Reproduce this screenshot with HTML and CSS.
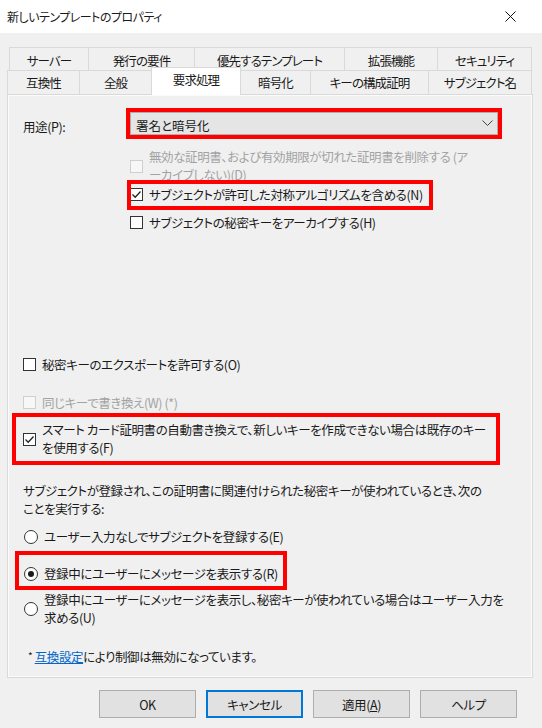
FILE: index.html
```html
<!DOCTYPE html>
<html lang="ja">
<head>
  <meta charset="UTF-8">
  <meta name="viewport" content="width=device-width, initial-scale=1.0">
  <title>新しいテンプレートのプロパティ</title>
  <link rel="stylesheet" href="styles.css">
</head>
<body>

  <div class="titlebar">
    <span class="title">新しいテンプレートのプロパティ</span>
    <svg class="close" width="11" height="11" viewBox="0 0 11 11">
      <path d="M0.5 0.5L10.5 10.5M10.5 0.5L0.5 10.5" stroke="#111" stroke-width="1" fill="none"/>
    </svg>
  </div>

  <div class="sheet">
    <div class="tabrow top">
      <div class="tab">サーバー</div>
      <div class="tab">発行の要件</div>
      <div class="tab">優先するテンプレート</div>
      <div class="tab">拡張機能</div>
      <div class="tab">セキュリティ</div>
    </div>
    <div class="tabrow bottom">
      <div class="tab">互換性</div>
      <div class="tab">全般</div>
      <div class="tab active">要求処理</div>
      <div class="tab">暗号化</div>
      <div class="tab">キーの構成証明</div>
      <div class="tab">サブジェクト名</div>
    </div>

    <div class="panel">
      <div class="field">
        <span class="label">用途(P):</span>
        <div class="combo">
          <span class="combo-text">署名と暗号化</span>
          <svg width="11" height="7" viewBox="0 0 11 7">
            <path d="M0.5 0.5L5.5 5.5L10.5 0.5" stroke="#444" stroke-width="1" fill="none"/>
          </svg>
        </div>
      </div>

      <div class="row tall indent disabled sp-13">
        <span class="box"></span>
        <span class="text">無効な証明書、および有効期限が切れた証明書を削除する (ア<br>ーカイブしない)(D)</span>
      </div>

      <div class="row indent mark mark-algo sp-2">
        <span class="box checked">
          <svg width="11" height="11" viewBox="0 0 11 11"><path d="M1.5 5.5L4.2 8.2L9.5 2.5" stroke="#222" stroke-width="1.3" fill="none"/></svg>
        </span>
        <span class="text">サブジェクトが許可した対称アルゴリズムを含める(N)</span>
      </div>

      <div class="row indent sp-11">
        <span class="box"></span>
        <span class="text">サブジェクトの秘密キーをアーカイブする(H)</span>
      </div>

      <div class="row sp-125">
        <span class="box"></span>
        <span class="text">秘密キーのエクスポートを許可する(O)</span>
      </div>

      <div class="row disabled sp-21">
        <span class="box"></span>
        <span class="text">同じキーで書き換え(W) (*)</span>
      </div>

      <div class="row tall mark mark-smartcard sp-10">
        <span class="box checked">
          <svg width="11" height="11" viewBox="0 0 11 11"><path d="M1.5 5.5L4.2 8.2L9.5 2.5" stroke="#222" stroke-width="1.3" fill="none"/></svg>
        </span>
        <span class="text">スマート カード証明書の自動書き換えで、新しいキーを作成できない場合は既存のキー<br>を使用する(F)</span>
      </div>

      <p class="para sp-25">サブジェクトが登録され、この証明書に関連付けられた秘密キーが使われているとき、次の<br>ことを実行する:</p>

      <div class="row sp-10">
        <span class="radio"></span>
        <span class="text">ユーザー入力なしでサブジェクトを登録する(E)</span>
      </div>

      <div class="row mark mark-prompt sp-20">
        <span class="radio selected"></span>
        <span class="text">登録中にユーザーにメッセージを表示する(R)</span>
      </div>

      <div class="row tall sp-9">
        <span class="radio"></span>
        <span class="text">登録中にユーザーにメッセージを表示し、秘密キーが使われている場合はユーザー入力を<br>求める(U)</span>
      </div>

      <p class="note sp-21"><span class="star">*</span> <a href="#" class="link">互換設定</a>により制御は無効になっています。</p>
    </div>

    <div class="buttons">
      <button class="btn">OK</button>
      <button class="btn default">キャンセル</button>
      <button class="btn">適用(<u>A</u>)</button>
      <button class="btn">ヘルプ</button>
    </div>
  </div>

</body>
</html>
```

FILE: styles.css
```css
body {
  margin: 0;
  width: 542px;
  height: 728px;
  overflow: hidden;
  background: #f0f0f0;
  font-family: "Noto Sans CJK JP", "Noto Sans", sans-serif;
  font-size: 12.5px;
  letter-spacing: -0.4px;
  font-feature-settings: "palt";
  color: #1a1a1a;
}

/* タイトルバー */
.titlebar {
  height: 33px;
  background: #fff;
  display: flex;
  align-items: center;
  justify-content: space-between;
  padding: 0 26px 0 7px;
}

.title {
  font-size: 12px;
  letter-spacing: -0.5px;
}

.sheet {
  padding: 14px 0 0 7px;
}

/* タブ */
.tabrow {
  display: grid;
}

.tabrow.top {
  grid-template-columns: 79px 106px 150px 93px 95px;
  height: 23px;
  margin-left: 2px;
}

.tabrow.bottom {
  grid-template-columns: 72px 72px 89px 70px 118px 104px;
  height: 24px;
}

.tab {
  display: flex;
  align-items: center;
  justify-content: center;
  border-top: 1px solid #d9d9d9;
  border-left: 1px solid #d9d9d9;
  white-space: nowrap;
  letter-spacing: -0.9px;
}

.tab:last-child {
  border-right: 1px solid #d9d9d9;
}

.tabrow.top .tab {
  padding-top: 2px;
}

.tab.active {
  position: relative;
  z-index: 1;
  background: #fff;
  margin-top: -3px;
  margin-bottom: -1px;
  border-right: 1px solid #d9d9d9;
  margin-right: -1px;
  padding-bottom: 4px;
}

/* パネル */
.panel {
  width: 526px;
  height: 584px;
  box-sizing: border-box;
  border: 1px solid #d9d9d9;
  box-shadow: inset 0 0 0 1px #fbfbfb;
  padding: 0 15px;
}

.field {
  display: flex;
  align-items: flex-start;
  margin-top: 17px;
}

.label {
  width: 107px;
  padding-top: 6px;
  line-height: 17px;
}

.combo {
  width: 368px;
  height: 23px;
  box-sizing: border-box;
  background: #e5e5e5;
  border: 1px solid #adadad;
  outline: 4px solid #f00;
  display: flex;
  align-items: center;
  justify-content: space-between;
  padding: 0 4px 0 5px;
}

.combo-text {
  padding-top: 3px;
  letter-spacing: 0;
}

.row {
  position: relative;
  display: flex;
  align-items: center;
  gap: 6px;
  line-height: 17px;
  white-space: nowrap;
}

.row.tall {
  line-height: 18px;
}

.indent {
  margin-left: 107px;
}

.box {
  flex: none;
  width: 13px;
  height: 13px;
  box-sizing: border-box;
  border: 1px solid #333;
  background: #fff;
  display: flex;
  align-items: center;
  justify-content: center;
}

.disabled {
  color: #a3a3a3;
}

.disabled .box {
  border-color: #cfcfcf;
  background: #f7f7f7;
}

.radio {
  flex: none;
  width: 14px;
  height: 14px;
  box-sizing: border-box;
  border: 1px solid #333;
  border-radius: 50%;
  background: #fff;
  display: flex;
  align-items: center;
  justify-content: center;
  margin-left: 1px;
}

.radio.selected::before {
  content: "";
  width: 6px;
  height: 6px;
  border-radius: 50%;
  background: #1a1a1a;
}

.para,
.note {
  margin-bottom: 0;
  line-height: 18px;
  white-space: nowrap;
}

.note {
  padding-left: 5px;
}

.star {
  font-size: 10px;
  position: relative;
  top: -2px;
}

.link {
  color: #0066cc;
  text-decoration: underline;
}

/* 赤枠 (注釈) */
.mark::after {
  content: "";
  position: absolute;
  border: 4px solid #f00;
  pointer-events: none;
}

.mark-algo::after {
  top: -6px;
  right: 84px;
  bottom: -7px;
  left: -3px;
}

.mark-smartcard::after {
  top: -8px;
  right: 17px;
  bottom: -8px;
  left: -11px;
}

.mark-prompt::after {
  top: -14px;
  right: 230px;
  bottom: -8px;
  left: -8px;
}

/* 行間 */
.sp-2 { margin-top: 2px; }
.sp-9 { margin-top: 9px; }
.sp-10 { margin-top: 10px; }
.sp-11 { margin-top: 11px; }
.sp-13 { margin-top: 13px; }
.sp-20 { margin-top: 20px; }
.sp-21 { margin-top: 21px; }
.sp-25 { margin-top: 25px; }
.sp-125 { margin-top: 125px; }

/* ボタン */
.buttons {
  display: flex;
  justify-content: flex-end;
  gap: 10px;
  padding-right: 25px;
  margin-top: 12px;
}

.btn {
  width: 97px;
  height: 28px;
  background: #e1e1e1;
  border: 1px solid #adadad;
  font: inherit;
  letter-spacing: -0.4px;
  color: #1a1a1a;
  padding: 0;
}

.btn.default {
  border-color: #0078d7;
  box-shadow: inset 0 0 0 1px #0078d7;
}
```
